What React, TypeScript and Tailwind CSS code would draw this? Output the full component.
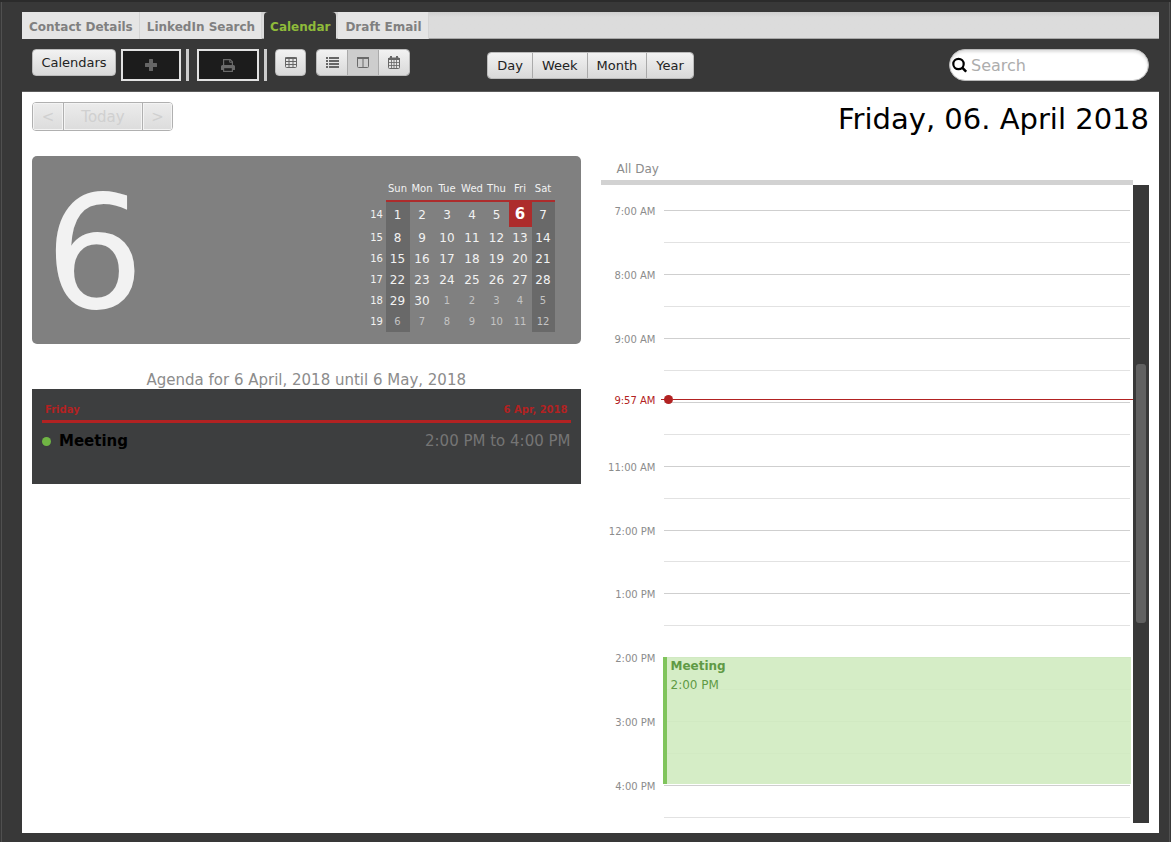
import React from "react";

const RAISED = "bg-linear-to-b from-[#f2f2f2] to-[#d9d9d9] text-[#222]";
const FADED = "bg-linear-to-b from-[#ececec] to-[#dcdcdc] pt-0.5 text-[#d0d0d0] shadow-[inset_0_0_0_1px_#f4f4f4]";

function PlusIcon() {
  return (
    <svg width="12" height="12" viewBox="0 0 12 12" fill="#666" aria-hidden="true">
      <path d="M4 .6q0-.6.6-.6h2.8q.6 0 .6.6V4h3.400q.6 0 .6.6v2.800q0 .6-.6.6H8v3.400q0 .6-.6.6H4.600q-.6 0-.6-.6V8H.6q-.6 0-.6-.6V4.600q0-.6.6-.6H4z" />
    </svg>
  );
}

function PrintIcon() {
  return (
    <svg width="14" height="13" viewBox="0 0 14 13" fill="none" aria-hidden="true">
      <path d="M2.600 6.500V.6h6.600l2.200 2.200v3.700" stroke="#6a6a6a" strokeWidth="1.200" />
      <path d="M8.700.6v2.700h2.700" stroke="#6a6a6a" />
      <path d="M1.500 6h11q1.500 0 1.500 1.500v3q0 .5-.5.5H12v1.500q0 .5-.5.5h-9q-.5 0-.5-.5V11H.5q-.5 0-.5-.5v-3Q0 6 1.500 6z" fill="#6a6a6a" />
      <path d="M3.200 9.200h7.600v2.600H3.200z" fill="#1c1c1c" />
    </svg>
  );
}

function TableIcon() {
  return (
    <svg width="12" height="11" viewBox="0 0 12 11" fill="none" stroke="#666" aria-hidden="true">
      <rect x=".5" y=".5" width="11" height="10" rx="1" />
      <path d="M0 1.200h12" strokeWidth="1.600" />
      <path d="M1 4.500h10M1 7.500h10M4 1v9M8 1v9" />
    </svg>
  );
}

function ListIcon() {
  return (
    <svg width="13" height="11" viewBox="0 0 13 11" fill="#666" aria-hidden="true">
      <path d="M0 0h2v2H0zM3 0h10v2H3zM0 3h2v2H0zM3 3h10v2H3zM0 6h2v2H0zM3 6h10v2H3zM0 9h2v2H0zM3 9h10v2H3z" />
    </svg>
  );
}

function ColumnsIcon() {
  return (
    <svg width="12" height="11" viewBox="0 0 12 11" fill="none" stroke="#6a6a6a" aria-hidden="true">
      <rect x=".5" y=".5" width="11" height="10" rx="1" />
      <path d="M0 1h12" strokeWidth="2" />
      <path d="M6 1v9" />
    </svg>
  );
}

function CalendarIcon() {
  return (
    <svg width="12" height="13" viewBox="0 0 12 13" fill="none" stroke="#666" aria-hidden="true">
      <rect x=".5" y="2" width="11" height="10.500" rx="1" />
      <path d="M0 3h12" strokeWidth="2" />
      <path d="M3 0v3M9 0v3" strokeWidth="2" />
      <path d="M1 6.500h10M1 9.500h10M3.500 4v8M6 4v8M8.500 4v8" strokeWidth=".8" />
    </svg>
  );
}

function SearchIcon() {
  return (
    <svg width="15" height="16" viewBox="0 0 15 16" fill="none" stroke="#000" aria-hidden="true">
      <circle cx="6.500" cy="7" r="5.200" strokeWidth="2.200" />
      <path d="M10.200 10.700l4 4" strokeWidth="2.600" />
    </svg>
  );
}

function Tabs() {
  const tabs = ["Contact Details", "LinkedIn Search", "Calendar", "Draft Email"];
  return (
    <nav className="flex h-[27px] border-b border-[#a8a8a8] bg-linear-to-b from-[#cfcfcf] via-[#dcdcdc] via-20% to-[#dcdcdc] text-xs font-bold">
      {tabs.map((t) => (
        <a
          key={t}
          href="#"
          className={
            t === "Calendar"
              ? "mx-0.5 flex h-[27px] items-center rounded-t-sm bg-[#383838] px-1.5 pt-0.5 text-[#8fbb3a]"
              : "flex h-[27px] items-center border-r border-[#d4d4d4] bg-[#e5e5e5] pt-0.5 pr-1.5 pl-[7px] text-[#808080]"
          }
        >
          {t}
        </a>
      ))}
    </nav>
  );
}

function Divider() {
  return <span className="h-8 w-[3px] bg-[#ccc]" />;
}

function Toolbar() {
  const views = [
    { name: "List view", icon: <ListIcon /> },
    { name: "Split view", icon: <ColumnsIcon /> },
    { name: "Calendar view", icon: <CalendarIcon /> },
  ];
  return (
    <div className="grid h-[53px] grid-cols-[1fr_auto_1fr] items-start border-b border-[#5c5c5c] px-2.5 pt-2.5">
      <div className="flex items-start">
        <button className={`h-[27px] w-[84px] rounded-sm border border-[#bbb] text-[13px] ${RAISED}`}>Calendars</button>
        <button aria-label="Add event" className="ml-[5px] flex h-8 w-[60px] items-center justify-center border-2 border-[#e2e2e2] bg-[#1c1c1c]">
          <PlusIcon />
        </button>
        <div className="ml-[5px] flex gap-2">
          <Divider />
          <button aria-label="Print" className="flex h-8 w-[62px] items-center justify-center border-2 border-[#e2e2e2] bg-[#1c1c1c]">
            <PrintIcon />
          </button>
        </div>
        <div className="ml-[5px] flex gap-2">
          <Divider />
          <button aria-label="Table view" className={`flex h-[27px] w-[31px] items-center justify-center rounded-sm border border-[#bbb] ${RAISED}`}>
            <TableIcon />
          </button>
        </div>
        <div className="ml-2.5 flex h-[27px] w-[94px] divide-x divide-[#aaa] overflow-hidden rounded-sm border border-[#bbb]">
          {views.map((v) => (
            <button
              key={v.name}
              aria-label={v.name}
              className={
                v.name === "Split view"
                  ? "flex flex-1 items-center justify-center bg-[#cdcdcd]"
                  : `flex flex-1 items-center justify-center ${RAISED}`
              }
            >
              {v.icon}
            </button>
          ))}
        </div>
      </div>
      <div className="mt-[3px] flex h-[27px] divide-x divide-[#aaa] overflow-hidden rounded-sm border border-[#bbb] text-[13px]">
        {["Day", "Week", "Month", "Year"].map((d) => (
          <button key={d} className={`px-[9px] ${RAISED}`}>
            {d}
          </button>
        ))}
      </div>
      <label className="flex h-8 w-[200px] items-center gap-1 justify-self-end rounded-full border border-[#bbb] bg-white pl-0.5 shadow-[inset_0_2px_3px_#ddd]">
        <SearchIcon />
        <input
          aria-label="Search"
          placeholder="Search"
          className="min-w-0 flex-1 bg-transparent pt-0.5 pr-3 text-base text-black outline-none placeholder:text-[#adadad]"
        />
      </label>
    </div>
  );
}

const WEEKDAYS = ["Sun", "Mon", "Tue", "Wed", "Thu", "Fri", "Sat"];
const WEEKS = [
  { no: 14, days: [1, 2, 3, 4, 5, 6, 7] },
  { no: 15, days: [8, 9, 10, 11, 12, 13, 14] },
  { no: 16, days: [15, 16, 17, 18, 19, 20, 21] },
  { no: 17, days: [22, 23, 24, 25, 26, 27, 28] },
  { no: 18, days: [29, 30, 1, 2, 3, 4, 5] },
  { no: 19, days: [6, 7, 8, 9, 10, 11, 12] },
];

function dayClass(week: number, col: number, day: number) {
  const weekend = col === 0 || col === 6 ? "bg-[#696969] " : "";
  if (week === 0 && day === 6) return "bg-[#ad2c2c] text-[15px] font-bold text-white";
  if ((week === 4 && day < 20) || week === 5) return weekend + "text-[10px] text-[#c4c4c4]";
  return weekend + "text-xs leading-none text-[#f2f2f2]";
}

function MiniMonth() {
  return (
    <table className="w-[187px] table-fixed border-separate border-spacing-0 text-center leading-none text-[#f2f2f2]">
      <colgroup>
        <col className="w-[18px]" />
        <col className="w-6" />
        <col className="w-[25px]" />
        <col className="w-[25px]" />
        <col className="w-[25px]" />
        <col className="w-6" />
        <col className="w-[23px]" />
        <col className="w-[23px]" />
      </colgroup>
      <thead>
        <tr className="h-6 text-[10px]">
          <td />
          {WEEKDAYS.map((d) => (
            <th key={d} className="border-b-2 border-[#ad2c2c] p-0 font-normal">
              {d}
            </th>
          ))}
        </tr>
      </thead>
      <tbody>
        {WEEKS.map((w, i) => (
          <tr key={w.no} className={i === 0 ? "h-[25px]" : "h-[21px]"}>
            <th className="p-0 text-[10px] font-normal">{w.no}</th>
            {w.days.map((d, c) => (
              <td key={c} className={`p-0 ${dayClass(i, c, d)}`}>
                {d}
              </td>
            ))}
          </tr>
        ))}
      </tbody>
    </table>
  );
}

function Agenda() {
  return (
    <section className="mt-[26px]">
      <h2 className="pt-0.5 text-center text-[15px] leading-[17px] text-[#8c8c8c]">Agenda for 6 April, 2018 until 6 May, 2018</h2>
      <div className="h-[95px] bg-[#3d3e3f] px-2.5 pt-2.5">
        <div className="flex h-6 items-center justify-between border-b-[3px] border-[#b22222] px-[3px] text-[10px] font-bold text-[#b22222]">
          <span>Friday</span>
          <span>6 Apr, 2018</span>
        </div>
        <div className="flex h-9 items-center text-[15px]">
          <span className="size-[9px] rounded-full bg-[#70b544]" />
          <span className="ml-2 font-bold text-black">Meeting</span>
          <span className="ml-auto text-[#757575]">2:00 PM to 4:00 PM</span>
        </div>
      </div>
    </section>
  );
}

const HOURS = ["7:00 AM", "8:00 AM", "9:00 AM", "", "11:00 AM", "12:00 PM", "1:00 PM", "2:00 PM", "3:00 PM", "4:00 PM"];

function DaySchedule() {
  return (
    <section className="flex min-h-0 flex-col">
      <div className="mr-4 h-[29px] shrink-0 border-b-[5px] border-[#d2d2d2] pt-1 pl-4 text-xs leading-[18px] text-[#8c8c8c]">
        All Day
      </div>
      <div className="flex min-h-0 flex-1">
        <div className="flex-1 overflow-hidden pt-[25px]">
          <div className="relative flex h-[639px] flex-col">
            {HOURS.map((h, i) => (
              <div key={i} className="flex flex-1 gap-2">
                <div className="-mt-1.5 w-[55px] text-right text-[10px] leading-4 text-[#8c8c8c]">{h}</div>
                <div className="mr-[3px] flex flex-1 flex-col">
                  <div className="flex-1 border-t border-[#cfcfcf]" />
                  <div className="flex-1 border-t border-[#e2e2e2]" />
                </div>
              </div>
            ))}
            <div
              className="absolute right-0.5 left-[62px] border-l-4 border-[#80c45c] bg-[#d0ebc0]/90 pl-1 text-xs text-[#5f9a45]"
              style={{ top: "70%", height: "19.8%" }}
            >
              <div className="leading-[18px] font-bold">Meeting</div>
              <div className="leading-5">2:00 PM</div>
            </div>
            <div className="absolute inset-x-0 flex h-[9px] items-center text-[#b22222]" style={{ top: "29%" }}>
              <span className="w-[55px] pt-0.5 text-right text-[10px]">9:57 AM</span>
              <span className="ml-[5px] h-px w-1 bg-current" />
              <span className="-ml-px size-[9px] rounded-full bg-current" />
              <span className="h-px flex-1 bg-current" />
            </div>
          </div>
        </div>
        <div className="relative w-4 bg-[#383838]">
          <div className="absolute inset-x-[3px] rounded-[3px] bg-[#616161]" style={{ top: "28%", height: "40.6%" }} />
        </div>
      </div>
    </section>
  );
}

export default function App() {
  return (
    <div className="flex h-screen flex-col border-t-2 border-[#2b2b2b] bg-[#383838] font-['DejaVu_Sans',sans-serif]">
      <div className="mx-px flex min-h-0 flex-1 flex-col border-x border-[#505050] pt-2.5 pr-2.5 pb-[9px] pl-5">
        <Tabs />
        <Toolbar />
        <main className="flex min-h-0 flex-1 flex-col bg-white p-2.5">
          <header className="flex h-[54px] shrink-0 items-start justify-between">
            <div className="flex h-[29px] divide-x divide-[#b0b0b0] overflow-hidden rounded-sm border border-[#b0b0b0] text-[15px]">
              <button aria-label="Previous day" className={`w-[31px] ${FADED}`}>&lt;</button>
              <button className={`w-[79px] ${FADED}`}>Today</button>
              <button aria-label="Next day" className={`w-[29px] ${FADED}`}>&gt;</button>
            </div>
            <h1 className="text-[29px] leading-[34px] text-black">Friday, 06. April 2018</h1>
          </header>
          <div className="grid min-h-0 flex-1 grid-cols-2 gap-5">
            <div>
              <div className="flex h-[188px] items-start justify-between rounded-[5px] bg-[#808080] pt-[22px] pr-[26px] pl-[13px]">
                <span className="text-[156px] leading-[152px] text-[#f2f2f2]">6</span>
                <MiniMonth />
              </div>
              <Agenda />
            </div>
            <DaySchedule />
          </div>
        </main>
      </div>
    </div>
  );
}
